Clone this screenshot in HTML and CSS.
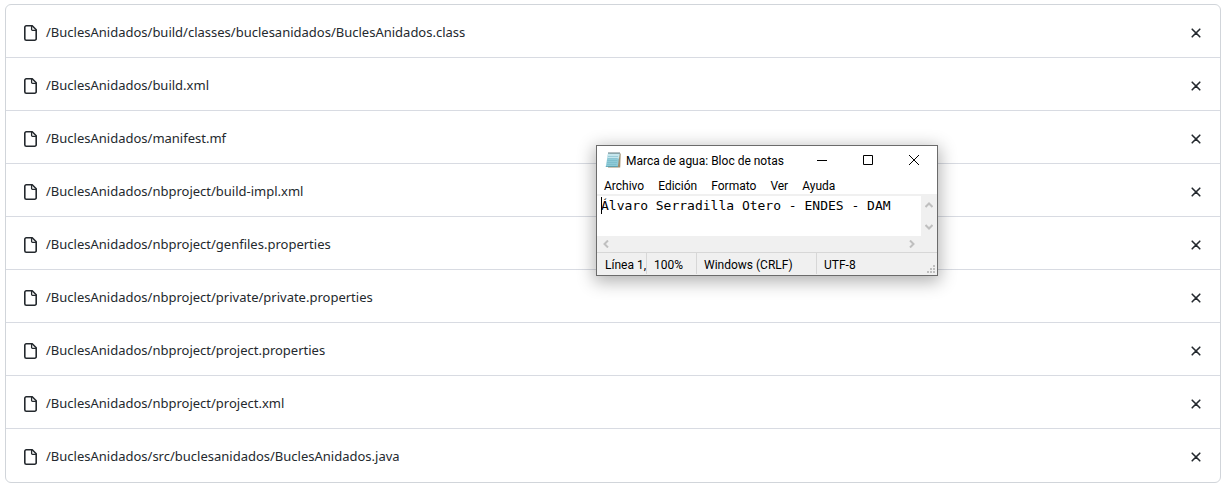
FILE: index.html
```
<!DOCTYPE html>
<html lang="es">
<head>
<meta charset="utf-8">
<title>BuclesAnidados</title>
<link rel="stylesheet" href="styles.css">
</head>
<body>
<svg class="sprite" aria-hidden="true">
  <symbol id="file" viewBox="0 0 16 16">
    <path d="M3.800.8h6.400l4 4v8.900a1.500 1.500 0 0 1-1.500 1.500H4.300a1.500 1.500 0 0 1-1.500-1.500V2.300A1.500 1.500 0 0 1 4.300.8z" fill="none" stroke="currentColor" stroke-width="1.600"/>
    <path d="M9.600 1v3.400a.9.9 0 0 0 .9.9H14" fill="none" stroke="currentColor" stroke-width="1.300"/>
  </symbol>
  <symbol id="cross" viewBox="0 0 16 16">
    <path d="M4.200 4.200l7.600 7.600M11.800 4.200l-7.600 7.600" fill="none" stroke="currentColor" stroke-width="1.600" stroke-linecap="round"/>
  </symbol>
</svg>
<main class="page">
  <ul class="files">
    <li class="file"><svg class="icon"><use href="#file"/></svg><span class="path">/BuclesAnidados/build/classes/buclesanidados/BuclesAnidados.class</span><button class="remove" aria-label="Quitar"><svg class="icon"><use href="#cross"/></svg></button></li>
    <li class="file"><svg class="icon"><use href="#file"/></svg><span class="path">/BuclesAnidados/build.xml</span><button class="remove" aria-label="Quitar"><svg class="icon"><use href="#cross"/></svg></button></li>
    <li class="file"><svg class="icon"><use href="#file"/></svg><span class="path">/BuclesAnidados/manifest.mf</span><button class="remove" aria-label="Quitar"><svg class="icon"><use href="#cross"/></svg></button></li>
    <li class="file"><svg class="icon"><use href="#file"/></svg><span class="path">/BuclesAnidados/nbproject/build-impl.xml</span><button class="remove" aria-label="Quitar"><svg class="icon"><use href="#cross"/></svg></button></li>
    <li class="file"><svg class="icon"><use href="#file"/></svg><span class="path">/BuclesAnidados/nbproject/genfiles.properties</span><button class="remove" aria-label="Quitar"><svg class="icon"><use href="#cross"/></svg></button></li>
    <li class="file"><svg class="icon"><use href="#file"/></svg><span class="path">/BuclesAnidados/nbproject/private/private.properties</span><button class="remove" aria-label="Quitar"><svg class="icon"><use href="#cross"/></svg></button></li>
    <li class="file"><svg class="icon"><use href="#file"/></svg><span class="path">/BuclesAnidados/nbproject/project.properties</span><button class="remove" aria-label="Quitar"><svg class="icon"><use href="#cross"/></svg></button></li>
    <li class="file"><svg class="icon"><use href="#file"/></svg><span class="path">/BuclesAnidados/nbproject/project.xml</span><button class="remove" aria-label="Quitar"><svg class="icon"><use href="#cross"/></svg></button></li>
    <li class="file"><svg class="icon"><use href="#file"/></svg><span class="path">/BuclesAnidados/src/buclesanidados/BuclesAnidados.java</span><button class="remove" aria-label="Quitar"><svg class="icon"><use href="#cross"/></svg></button></li>
  </ul>
</main>

<section class="notepad" aria-label="Bloc de notas">
  <header class="titlebar">
    <svg class="app-icon" viewBox="0 0 16 16">
      <path d="M5 1.500h10.700L15.200 15.500H3z" fill="#a08c6c"/>
      <path d="M3 1.500h11.600L12.900 14.500H.8z" fill="#8fcbd8"/>
      <path d="M3 1.500h11.600l-.6 5H2.200z" fill="#c5e6ed"/>
      <path d="M3 4.500h10M2.600 6.500h10M2.300 8.500h10M2 10.500h10M2 12.500h9.500" stroke="#6fb2c3" stroke-width=".5"/>
      <path d="M3.500 1h11.500" stroke="#38575f" stroke-width="1.500" stroke-dasharray="1 1"/>
      <path d="M.8 14.500h12" stroke="#4f9db0" stroke-width=".8"/>
    </svg>
    <h1 class="title">Marca de agua: Bloc de notas</h1>
    <div class="controls">
      <button class="control" aria-label="Minimizar"><svg viewBox="0 0 12 12"><path d="M1 5.500h10"/></svg></button>
      <button class="control" aria-label="Maximizar"><svg viewBox="0 0 12 12"><path d="M1.500.5h9v9h-9z"/></svg></button>
      <button class="control" aria-label="Cerrar"><svg viewBox="0 0 12 12"><path d="M1 0l10 10M11 0L1 10"/></svg></button>
    </div>
  </header>
  <nav class="menu">
    <button class="menu-item">Archivo</button>
    <button class="menu-item">Edición</button>
    <button class="menu-item">Formato</button>
    <button class="menu-item">Ver</button>
    <button class="menu-item">Ayuda</button>
  </nav>
  <div class="editor">
    <textarea class="text" rows="2" aria-label="Texto" spellcheck="false">Álvaro Serradilla Otero - ENDES - DAM</textarea>
    <span class="caret"></span>
    <div class="scroll-y">
      <svg class="arrow" viewBox="0 0 8 8"><path d="M.5 6L4 2.500 7.500 6"/></svg>
      <svg class="arrow" viewBox="0 0 8 8"><path d="M.5 2L4 5.500 7.500 2"/></svg>
    </div>
    <div class="scroll-x">
      <svg class="arrow" viewBox="0 0 8 8"><path d="M6 .5L2.500 4 6 7.500"/></svg>
      <svg class="arrow" viewBox="0 0 8 8"><path d="M2 .5L5.500 4 2 7.500"/></svg>
    </div>
  </div>
  <footer class="status">
    <span class="cell">Línea 1,</span>
    <span class="cell">100%</span>
    <span class="cell">Windows (CRLF)</span>
    <span class="cell">UTF-8</span>
    <svg class="grip" viewBox="0 0 8 8"><path d="M6 0h2v2H6zM3 3h2v2H3zM6 3h2v2H6zM0 6h2v2H0zM3 6h2v2H3zM6 6h2v2H6z"/></svg>
  </footer>
</section>
</body>
</html>
```
FILE: styles.css
```
* { box-sizing: border-box; }
body {
  margin: 0;
  background: #fff;
  color: #24292e;
  font: 13px/20px "Noto Sans", "Open Sans", sans-serif;
}
button {
  margin: 0;
  padding: 0;
  border: 0;
  background: none;
  color: inherit;
  font: inherit;
}
.sprite { position: absolute; width: 0; height: 0; }
.page { padding: 4px 4px 4px 5px; }
.files {
  margin: 0;
  padding: 0;
  list-style: none;
  border: 1px solid #d1d5da;
  border-radius: 6px;
}
.file {
  display: flex;
  align-items: center;
  gap: 8px;
  min-height: 53px;
  padding: 4px 16px 0;
}
.file + .file { border-top: 1px solid #d8dbe2; }
.file:first-child { min-height: 52px; }
.file:last-child { min-height: 54px; padding-bottom: 1px; }
.icon { display: block; flex: none; width: 16px; height: 16px; }
.path { flex: 1; padding-bottom: 2px; }
.remove { flex: none; }

.notepad {
  position: absolute;
  left: 596px;
  top: 145px;
  width: 342px;
  border: 1px solid #6b6b6b;
  background: #fff;
  color: #000;
  font: 12px/16px Roboto, "Open Sans", sans-serif;
  box-shadow: 0 4px 16px 2px rgba(0, 0, 0, .3);
}
.titlebar { display: flex; align-items: center; height: 30px; padding-left: 8px; }
.app-icon { width: 16px; height: 16px; margin-bottom: 2px; }
.title { flex: 1; margin: 0 0 0 5px; font-size: 12px; font-weight: 400; white-space: nowrap; }
.controls { display: flex; }
.control { display: grid; place-items: center; width: 46px; height: 28px; }
.control svg { width: 12px; height: 12px; fill: none; stroke: #000; }
.menu { display: flex; gap: 14px; height: 18px; padding: 2px 7px 0; }
.editor {
  position: relative;
  display: grid;
  grid-template-columns: 1fr 16px;
  border-top: 2px solid #f0f0f0;
  background: #f0f0f0;
}
.text {
  display: block;
  width: 100%;
  height: 40px;
  padding: 1px 4px;
  border: 0;
  border-radius: 0;
  outline: 0;
  resize: none;
  overflow: hidden;
  background: #fff;
  color: #000;
  font: 13px/18px "DejaVu Sans Mono", monospace;
}
.caret { position: absolute; left: 4px; top: 1px; width: 1px; height: 17px; background: #000; }
.scroll-y { display: flex; flex-direction: column; justify-content: space-between; align-items: center; padding: 5px 0; }
.scroll-x { display: flex; justify-content: space-between; align-items: center; height: 16px; padding: 0 5px; }
.arrow { width: 8px; height: 8px; fill: none; stroke: #bfbfbf; stroke-width: 2; }
.status {
  position: relative;
  display: grid;
  grid-template-columns: 49px 50px 120px 1fr;
  height: 23px;
  padding-bottom: 1px;
  border-top: 1px solid #d7d7d7;
  background: #f0f0f0;
}
.cell { padding: 4px 0 0 7px; border-left: 1px solid #d7d7d7; white-space: nowrap; }
.cell:first-child { border-left: 0; padding-left: 8px; }
.grip { position: absolute; right: 2px; bottom: 2px; width: 8px; height: 8px; fill: #bfbfbf; }
```
